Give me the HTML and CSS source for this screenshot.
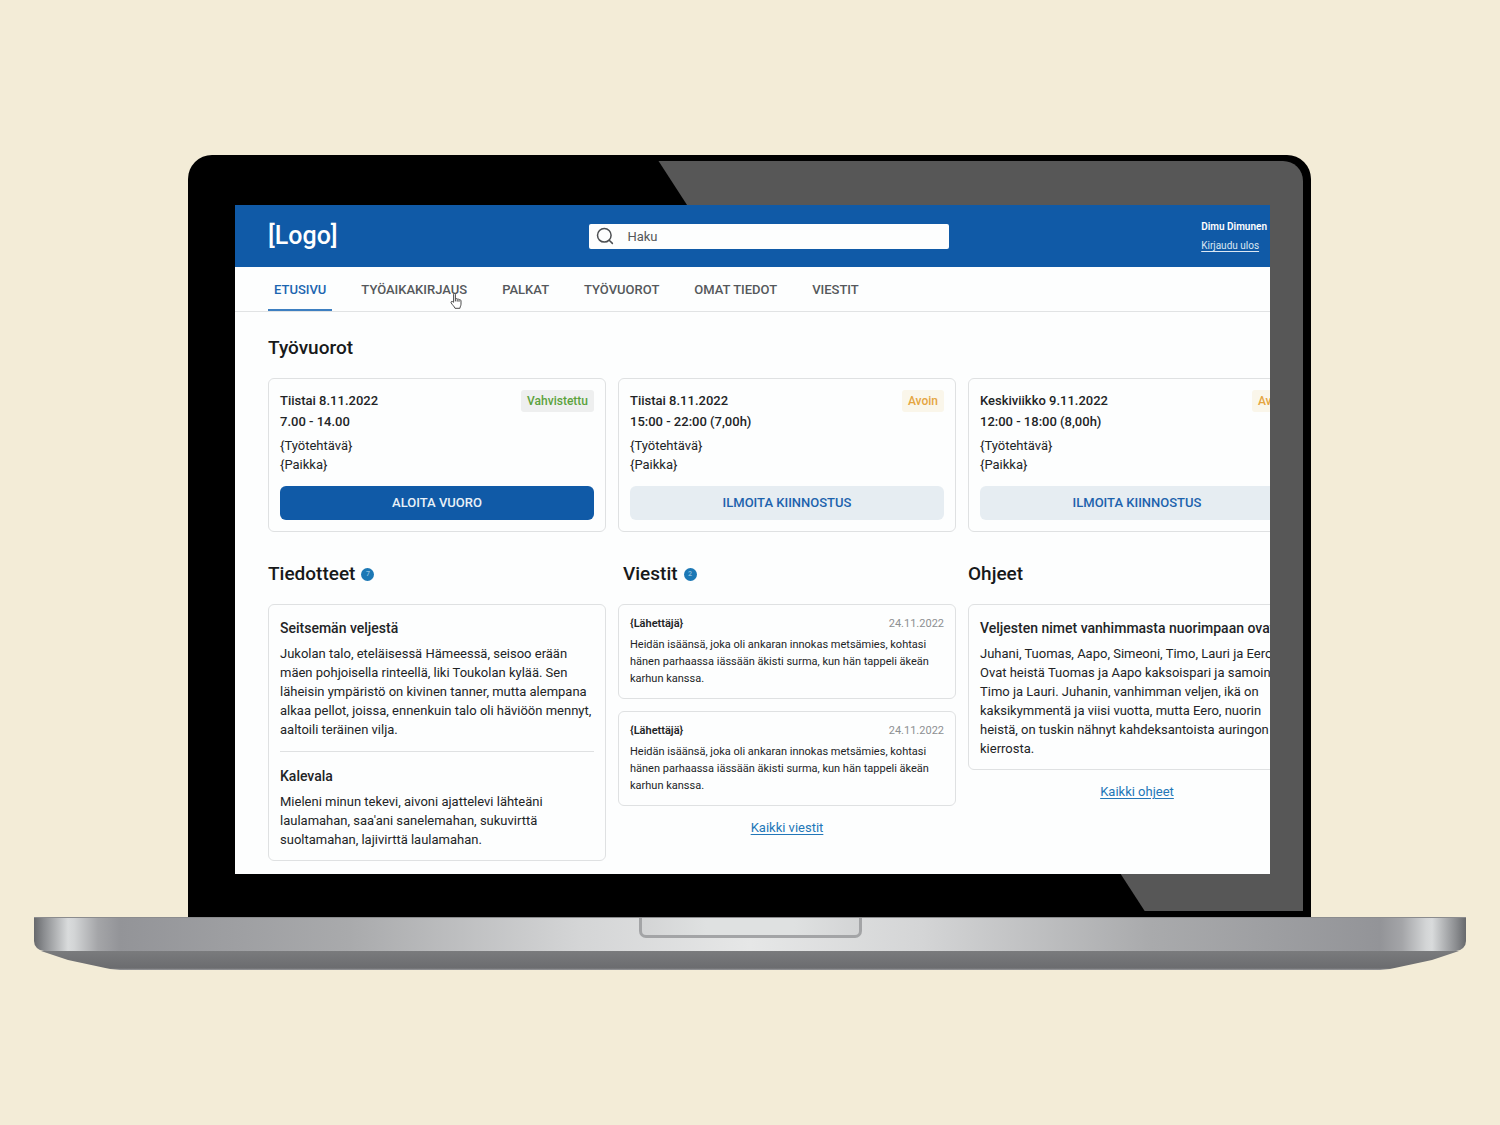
FILE: index.html
```html
<!DOCTYPE html>
<html lang="fi">
<head>
<meta charset="utf-8">
<meta name="viewport" content="width=device-width, initial-scale=1">
<title>Etusivu</title>
<link rel="stylesheet" href="styles.css">
</head>
<body>
<div class="laptop">
  <div class="lid">
    <div class="screen">
      <div class="app">
        <header class="header">
          <div class="logo">[Logo]</div>
          <form class="search" role="search">
            <label class="search-label" for="haku" aria-label="Haku">
              <svg width="18" height="18" viewBox="0 0 18 18" fill="none" stroke="#4c4f52" stroke-width="1.5" stroke-linecap="round"><circle cx="8.3" cy="8.3" r="6.8"/><path d="M13.2 13.2 16.4 16.4"/></svg>
            </label>
            <input class="search-input" id="haku" type="search" placeholder="Haku">
          </form>
          <div class="user">
            <span class="user-name">Dimu Dimunen</span>
            <a class="logout" href="#">Kirjaudu ulos</a>
          </div>
        </header>
        <nav class="nav">
          <a class="nav-item active" href="#">ETUSIVU</a>
          <a class="nav-item" href="#">TYÖAIKAKIRJAUS
            <svg class="cursor" width="12" height="18" viewBox="0 0 12 18" fill="#fff" stroke="#4a4a4a" stroke-width="1" stroke-linejoin="round"><path d="M3.6 10.3V2.2C3.6 1.2 5.4 1.2 5.4 2.2V7C5.6 6.3 7.1 6.5 7.2 7.3 7.6 6.7 8.9 6.9 9 7.8 9.6 7.4 11 7.7 11 8.8V12.2C11 13.9 10.1 14.3 9.9 16.3H5C4.4 14.4 2.4 13.1 1.2 10.9.5 9.7 1.9 9 2.6 9.6Z"/><path d="M5.4 7V9.4M7.2 7.5V9.6M9 8V9.8" fill="none"/></svg>
          </a>
          <a class="nav-item" href="#">PALKAT</a>
          <a class="nav-item" href="#">TYÖVUOROT</a>
          <a class="nav-item" href="#">OMAT TIEDOT</a>
          <a class="nav-item" href="#">VIESTIT</a>
        </nav>
        <main class="main">
          <section class="section">
            <h2 class="heading">Työvuorot</h2>
            <div class="columns">
              <article class="card">
                <div class="shift-top">
                  <h3 class="shift-time">Tiistai 8.11.2022<br>7.00 - 14.00</h3>
                  <span class="badge confirmed">Vahvistettu</span>
                </div>
                <p class="text shift-info">{Työtehtävä}<br>{Paikka}</p>
                <button class="button primary" type="button">ALOITA VUORO</button>
              </article>
              <article class="card">
                <div class="shift-top">
                  <h3 class="shift-time">Tiistai 8.11.2022<br>15:00 - 22:00 (7,00h)</h3>
                  <span class="badge open">Avoin</span>
                </div>
                <p class="text shift-info">{Työtehtävä}<br>{Paikka}</p>
                <button class="button" type="button">ILMOITA KIINNOSTUS</button>
              </article>
              <article class="card">
                <div class="shift-top">
                  <h3 class="shift-time">Keskiviikko 9.11.2022<br>12:00 - 18:00 (8,00h)</h3>
                  <span class="badge open">Avoin</span>
                </div>
                <p class="text shift-info">{Työtehtävä}<br>{Paikka}</p>
                <button class="button" type="button">ILMOITA KIINNOSTUS</button>
              </article>
            </div>
          </section>
          <div class="columns">
            <section class="section">
              <h2 class="heading">Tiedotteet <span class="count">7</span></h2>
              <div class="card">
                <article>
                  <h3 class="title">Seitsemän veljestä</h3>
                  <p class="text">Jukolan talo, eteläisessä Hämeessä, seisoo erään<br>mäen pohjoisella rinteellä, liki Toukolan kylää. Sen<br>läheisin ympäristö on kivinen tanner, mutta alempana<br>alkaa pellot, joissa, ennenkuin talo oli häviöön mennyt,<br>aaltoili teräinen vilja.</p>
                </article>
                <hr class="rule">
                <article>
                  <h3 class="title">Kalevala</h3>
                  <p class="text">Mieleni minun tekevi, aivoni ajattelevi lähteäni<br>laulamahan, saa'ani sanelemahan, sukuvirttä<br>suoltamahan, lajivirttä laulamahan.</p>
                </article>
              </div>
            </section>
            <section class="section">
              <h2 class="heading indented">Viestit <span class="count">2</span></h2>
              <div class="messages">
                <article class="card">
                  <div class="message-top"><h3 class="sender">{Lähettäjä}</h3><time class="date">24.11.2022</time></div>
                  <p class="message">Heidän isäänsä, joka oli ankaran innokas metsämies, kohtasi<br>hänen parhaassa iässään äkisti surma, kun hän tappeli äkeän<br>karhun kanssa.</p>
                </article>
                <article class="card">
                  <div class="message-top"><h3 class="sender">{Lähettäjä}</h3><time class="date">24.11.2022</time></div>
                  <p class="message">Heidän isäänsä, joka oli ankaran innokas metsämies, kohtasi<br>hänen parhaassa iässään äkisti surma, kun hän tappeli äkeän<br>karhun kanssa.</p>
                </article>
              </div>
              <a class="more" href="#">Kaikki viestit</a>
            </section>
            <section class="section">
              <h2 class="heading">Ohjeet</h2>
              <article class="card">
                <h3 class="title">Veljesten nimet vanhimmasta nuorimpaan ovat</h3>
                <p class="text">Juhani, Tuomas, Aapo, Simeoni, Timo, Lauri ja Eero.<br>Ovat heistä Tuomas ja Aapo kaksoispari ja samoin<br>Timo ja Lauri. Juhanin, vanhimman veljen, ikä on<br>kaksikymmentä ja viisi vuotta, mutta Eero, nuorin<br>heistä, on tuskin nähnyt kahdeksantoista auringon<br>kierrosta.</p>
              </article>
              <a class="more" href="#">Kaikki ohjeet</a>
            </section>
          </div>
        </main>
      </div>
    </div>
  </div>
  <div class="base"><div class="notch"></div></div>
  <div class="foot"></div>
</div>
</body>
</html>
```
FILE: styles.css
```css
* {
  box-sizing: border-box;
}

body {
  margin: 0;
  min-height: 100vh;
  display: flex;
  align-items: center;
  justify-content: center;
  background: #f3ecd7;
  color: #222426;
  font: 13px/19px Roboto, "Liberation Sans", sans-serif;
}

h2, h3, p {
  margin: 0;
}

/* Laptop */
.laptop {
  flex: 1;
  min-width: 0;
  margin: 0 34px;
}

.lid {
  position: relative;
  margin: 0 155px 0 154px;
  padding: 50px 41px 43px 47px;
  border-radius: 24px 24px 0 0;
  background: #000;
}

.lid::before {
  content: "";
  position: absolute;
  inset: 6px 8px 6px 0;
  border-radius: 0 20px 0 0;
  background: #575757;
  clip-path: polygon(42.2% 0, 100% 0, 100% 100%, 85.8% 100%);
}

.screen {
  position: relative;
  overflow: hidden;
  background: #fdfefe;
}

.base {
  height: 34px;
  border-top: 1px solid #8b8c8e;
  border-radius: 0 0 10px 10px;
  background: linear-gradient(90deg, #67696c 0, #8b8d90 10px, #d9dbdc 34px, #d3d5d6 40px, #a4a5a8 64px, #939498 86px, #a9aaac 22%, #d4d5d6 38%, #e6e7e7 50%, #d4d5d6 62%, #a9aaac 78%, #939498 calc(100% - 86px), #a4a5a8 calc(100% - 64px), #d3d5d6 calc(100% - 40px), #d9dbdc calc(100% - 34px), #8b8d90 calc(100% - 10px), #67696c 100%);
}

.notch {
  width: 223px;
  height: 20px;
  margin: 0 auto;
  border: 3px solid #a3a4a6;
  border-top: 0;
  border-radius: 0 0 7px 7px;
  background: linear-gradient(90deg, #d3d4d5, #dfe1e1 30%, #dfe1e1 70%, #d3d4d5);
}

.foot {
  height: 19px;
  background: linear-gradient(#7a7b7d, #6b6c6f 90%, #9a9b9e);
  clip-path: polygon(7px 0, calc(100% - 7px) 0, calc(100% - 34px) 9px, calc(100% - 62px) 15px, calc(100% - 76px) 18px, calc(100% - 86px) 100%, 86px 100%, 76px 18px, 62px 15px, 34px 9px);
}

/* App: wider than the screen, cut at its right edge */
.app {
  width: calc(100% + 68px);
}

.header {
  display: flex;
  align-items: center;
  justify-content: space-between;
  padding: 16px 71px 16px 33px;
  background: #105aa7;
  color: #fff;
}

.logo {
  font-size: 25px;
  font-weight: 500;
  line-height: 28px;
}

.search {
  display: flex;
  align-items: center;
  width: 360px;
  border-radius: 2px;
  background: #fdfefe;
}

.search-label {
  display: flex;
  padding: 0 13px 0 7px;
}

.search-input {
  flex: 1;
  min-width: 0;
  height: 25px;
  padding: 0;
  border: 0;
  background: none;
  color: #555759;
  font: inherit;
}

.search-input::placeholder {
  color: #555759;
  opacity: 1;
}

.user {
  display: flex;
  flex-direction: column;
  align-items: flex-start;
  font-size: 10px;
  line-height: 19px;
  margin: -4px 0;
}

.user-name {
  font-weight: 600;
}

.logout {
  color: #dbe7f3;
  text-underline-offset: 2px;
}

.nav {
  display: flex;
  gap: 23px;
  padding: 0 33px;
  border-bottom: 1px solid #e1e3e4;
}

.nav-item {
  position: relative;
  padding: 13px 6px 10px;
  border-bottom: 2px solid transparent;
  color: #55585b;
  font-weight: 500;
  text-decoration: none;
}

.nav-item.active {
  border-color: #3d7fc1;
  color: #1c65b0;
}

.cursor {
  position: absolute;
  right: 11px;
  bottom: -1px;
}

.main {
  display: flex;
  flex-direction: column;
  gap: 28px;
  padding: 22px 32px 13px 33px;
}

.section {
  min-width: 0;
}

.heading {
  display: flex;
  align-items: center;
  gap: 6px;
  margin-bottom: 16px;
  color: #17191a;
  font-size: 19px;
  font-weight: 500;
  line-height: 28px;
}

.indented {
  padding-left: 5px;
}

.count {
  width: 13px;
  height: 13px;
  border-radius: 50%;
  background: #1c78b5;
  color: #8fc0e0;
  font-size: 7px;
  line-height: 13px;
  text-align: center;
}

.columns {
  display: grid;
  grid-template-columns: repeat(3, minmax(0, 1fr));
  align-items: start;
  gap: 12px;
}

.card {
  padding: 11px;
  border: 1px solid #dfe1e2;
  border-radius: 6px;
}

.shift-top {
  display: flex;
  align-items: flex-start;
  justify-content: space-between;
}

.shift-time {
  font-size: 13px;
  font-weight: 500;
  line-height: 21px;
}

.shift-info {
  margin: 4px 0 12px;
}

.badge {
  padding: 0 6px;
  border-radius: 3px;
  font-size: 12px;
  font-weight: 500;
  line-height: 22px;
}

.confirmed {
  background: #eeefef;
  color: #5ba23c;
}

.open {
  background: #faf6ea;
  color: #e5a540;
}

.button {
  display: block;
  width: 100%;
  padding: 0;
  border: 0;
  border-radius: 6px;
  background: #e6edf2;
  color: #1c62ad;
  font: 500 13px/34px Roboto, "Liberation Sans", sans-serif;
}

.primary {
  background: #105aa7;
  color: #e9f1f8;
}

.title {
  margin-bottom: 4px;
  font-size: 14px;
  font-weight: 500;
  line-height: 24px;
  white-space: nowrap;
}

.text {
  white-space: nowrap;
}

.rule {
  margin: 12px 0;
  border: 0;
  border-top: 1px solid #dfe1e2;
}

.messages {
  display: grid;
  gap: 12px;
}

.message-top {
  display: flex;
  justify-content: space-between;
  margin-bottom: 4px;
  font-size: 11px;
  line-height: 16px;
}

.sender {
  font-size: 11px;
  font-weight: 600;
}

.date {
  color: #8d9092;
}

.message {
  font-size: 11px;
  line-height: 17px;
  white-space: nowrap;
}

.more {
  display: block;
  width: fit-content;
  margin: 12px auto 0;
  color: #2377b8;
  text-underline-offset: 2px;
}
```
